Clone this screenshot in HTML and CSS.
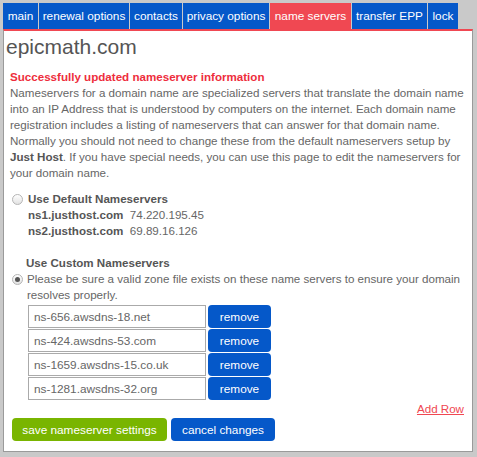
FILE: index.html
```html
<!DOCTYPE html>
<html>
<head>
<meta charset="utf-8">
<link rel="stylesheet" href="styles.css">
</head>
<body>
<div class="wrap">
  <nav class="tabs">
    <a class="tab t-main">main</a>
    <a class="tab t-renew">renewal options</a>
    <a class="tab t-contacts">contacts</a>
    <a class="tab t-privacy">privacy options</a>
    <a class="tab t-ns active">name servers</a>
    <a class="tab t-epp">transfer EPP</a>
    <a class="tab t-lock">lock</a>
  </nav>
  <div class="panel">
    <h1 class="domain">epicmath.com</h1>
    <p class="success">Successfully updated nameserver information</p>
    <p class="intro">Nameservers for a domain name are specialized servers that translate the domain name into an IP Address that is understood by computers on the internet. Each domain name registration includes a listing of nameservers that can answer for that domain name. Normally you should not need to change these from the default nameservers setup by <b>Just Host</b>. If you have special needs, you can use this page to edit the nameservers for your domain name.</p>

    <div class="option default">
      <span class="radio"></span>
      <div class="opt-body">
        <div class="opt-title">Use Default Nameservers</div>
        <div class="ns"><b>ns1.justhost.com</b>&nbsp; 74.220.195.45</div>
        <div class="ns"><b>ns2.justhost.com</b>&nbsp; 69.89.16.126</div>
      </div>
    </div>

    <div class="custom">
      <div class="opt-title indent">Use Custom Nameservers</div>
      <div class="option">
        <span class="radio checked"></span>
        <div class="opt-body">Please be sure a valid zone file exists on these name servers to ensure your domain resolves properly.</div>
      </div>
      <div class="rows">
        <div class="row"><input class="field" value="ns-656.awsdns-18.net"><button class="btn blue rm">remove</button></div>
        <div class="row"><input class="field" value="ns-424.awsdns-53.com"><button class="btn blue rm">remove</button></div>
        <div class="row"><input class="field" value="ns-1659.awsdns-15.co.uk"><button class="btn blue rm">remove</button></div>
        <div class="row"><input class="field" value="ns-1281.awsdns-32.org"><button class="btn blue rm">remove</button></div>
      </div>
      <div class="addrow"><a class="add">Add Row</a></div>
    </div>

    <div class="actions">
      <button class="btn green save">save nameserver settings</button>
      <button class="btn blue cancel">cancel changes</button>
    </div>
  </div>
</div>
</body>
</html>
```

FILE: styles.css
```css
html, body {
  margin: 0;
  padding: 0;
  background: #c9c9c9;
  font-family: "Liberation Sans", Arial, sans-serif;
  font-size: 11.6px;
  color: #666;
}
.wrap {
  padding: 3px 0 0 3px;
  width: 470px;
}
.tabs {
  display: flex;
  gap: 1px;
}
.tab {
  flex: none;
  display: block;
  box-sizing: border-box;
  background: #0558c9;
  color: #fff;
  height: 26px;
  line-height: 27px;
  font-size: 11.8px;
  text-align: center;
  white-space: nowrap;
}
.t-main { width: 35px; }
.t-renew { width: 90px; }
.t-contacts { width: 52px; }
.t-privacy { width: 86px; }
.t-ns { width: 81px; }
.t-epp { width: 75px; }
.t-lock { width: 30px; }
.tab.active { background: #f04852; }
.panel {
  background: #fff;
  border-top: 2px solid #f04852;
  border-left: 1px solid #9a9a9a;
  border-right: 1px solid #9a9a9a;
  border-bottom: 1px solid #9a9a9a;
  padding: 2px 8px 10px 6px;
}
.domain {
  margin: 0 0 0 -4px;
  font-size: 21px;
  font-weight: normal;
  color: #555;
  line-height: 28px;
}
.success {
  margin: 8px 0 0 0;
  color: #ee2d3c;
  font-weight: bold;
  line-height: 16px;
}
.intro {
  margin: 0;
  line-height: 16px;
}
.intro b { color: #555; }
.option {
  display: flex;
  align-items: flex-start;
}
.default { margin-top: 10px; }
.radio {
  flex: none;
  width: 9px;
  height: 9px;
  border: 1px solid #b5b5b5;
  border-radius: 50%;
  background: linear-gradient(#fff, #e2e2e2);
  margin: 3px 4px 0 2px;
  position: relative;
}
.radio.checked::after {
  content: "";
  position: absolute;
  left: 2px;
  top: 2px;
  width: 5px;
  height: 5px;
  border-radius: 50%;
  background: #555;
}
.opt-body { line-height: 16px; }
.opt-title { font-weight: bold; line-height: 16px; color: #555; }
.default .opt-body { padding-left: 1px; }
.indent { padding-left: 16px; }
.ns { line-height: 16px; }
.ns b { color: #555; }
.custom { margin-top: 16px; }
.rows {
  margin: 2px 0 0 18px;
  display: flex;
  flex-direction: column;
  gap: 1px;
}
.row { display: flex; gap: 2px; }
.field {
  width: 178px;
  height: 23px;
  box-sizing: border-box;
  border: 1px solid #aaa;
  font-family: "Liberation Sans", Arial, sans-serif;
  font-size: 11.8px;
  color: #666;
  padding: 0 5px;
  margin: 0;
}
.btn {
  border: none;
  color: #fff;
  font-family: "Liberation Sans", Arial, sans-serif;
  font-size: 11.8px;
  border-radius: 4px;
  height: 23px;
  padding: 0;
  margin: 0;
  cursor: pointer;
}
.blue { background: #0558c9; }
.green { background: #79b500; }
.rm { width: 63px; }
.addrow {
  text-align: right;
  margin-top: 1px;
  line-height: 16px;
}
.add {
  color: #f04852;
  text-decoration: underline;
}
.actions {
  display: flex;
  gap: 4px;
  margin: 1px 0 0 2px;
}
.save { width: 155px; }
.cancel { width: 104px; }
```
